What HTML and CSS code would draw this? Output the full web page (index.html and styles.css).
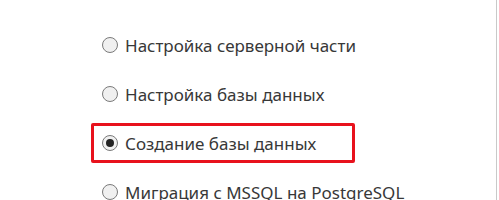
FILE: index.html
```
<!DOCTYPE html>
<html>
<head>
    <meta charset="UTF-8">
    <title>Установка</title>
    <link rel="stylesheet" href="styles.css">
</head>
<body>
    <div class="panel">
        <ul class="options">
            <li class="option"><span class="radio"></span>Настройка серверной части</li>
            <li class="option"><span class="radio"></span>Настройка базы данных</li>
            <li class="option selected"><span class="radio checked"></span>Создание базы данных</li>
            <li class="option"><span class="radio"></span>Миграция с MSSQL на PostgreSQL</li>
        </ul>
    </div>
</body>
</html>
```

FILE: styles.css
```
body {
    margin: 0;
    background-color: #fff;
    font-family: "Noto Sans", "Open Sans", sans-serif;
}

.panel {
    width: 496px;
    height: 200px;
    border-right: 1px solid #c9c9c9;
    overflow: hidden;
}

.options {
    list-style: none;
    margin: 0;
    padding: 25px 0 0 91px;
    display: flex;
    flex-direction: column;
    gap: 9px;
}

.option {
    box-sizing: border-box;
    display: flex;
    align-items: center;
    gap: 7px;
    width: 264px;
    height: 40px;
    padding-left: 8px;
    border: 3px solid transparent;
    border-radius: 2px;
    font-size: 17px;
    color: #383838;
    white-space: nowrap;
}

.option.selected {
    border-color: #e8121d;
}

.radio {
    width: 14px;
    height: 14px;
    border: 1px solid #7a7a7a;
    border-radius: 50%;
    background-color: #f0f0f0;
    display: flex;
    align-items: center;
    justify-content: center;
    flex-shrink: 0;
}

.radio.checked::after {
    content: "";
    width: 8px;
    height: 8px;
    border-radius: 50%;
    background-color: #222;
}
```
